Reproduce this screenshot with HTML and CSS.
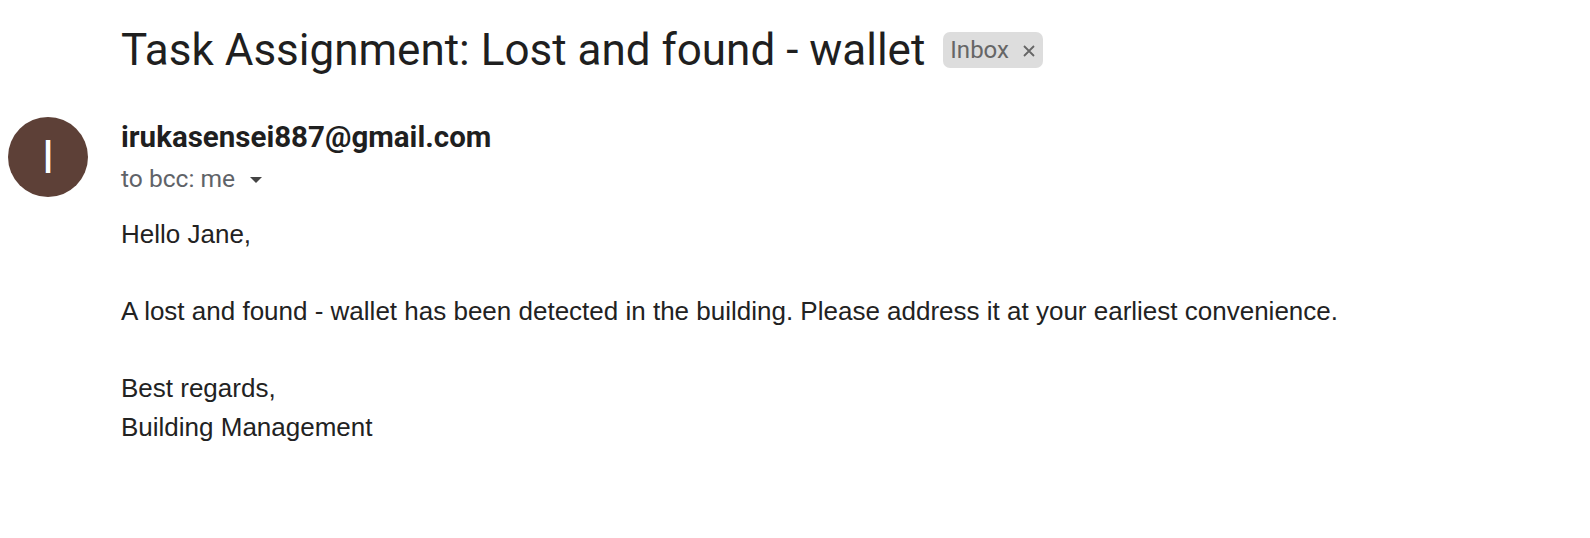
FILE: index.html
```html
<!DOCTYPE html>
<html lang="en">
<head>
<meta charset="utf-8">
<title>Task Assignment: Lost and found - wallet</title>
<link rel="stylesheet" href="styles.css">
</head>
<body>
<div class="mail">
  <div class="subject-row">
    <h1 class="subject">Task Assignment: Lost and found - wallet</h1>
    <span class="chip">Inbox
      <svg class="chip-x" width="12" height="12" viewBox="0 0 12 12"><path d="M1 1 L11 11 M11 1 L1 11" stroke="#666" stroke-width="1.8" fill="none"/></svg>
    </span>
  </div>
  <div class="message">
    <div class="avatar">I</div>
    <div class="content">
      <div class="sender">irukasensei887@gmail.com</div>
      <div class="recipients">to bcc: me
        <svg class="caret" width="12" height="6" viewBox="0 0 12 6"><path d="M0 0 L12 0 L6 6 Z" fill="#444"/></svg>
      </div>
      <div class="body">
        <p>Hello Jane,</p>
        <p>A lost and found - wallet has been detected in the building. Please address it at your earliest convenience.</p>
        <p>Best regards,<br>Building Management</p>
      </div>
    </div>
  </div>
</div>
</body>
</html>
```
FILE: styles.css
```css
html, body {
  margin: 0;
  padding: 0;
  background: #ffffff;
}
.mail {
  font-family: Roboto, "Liberation Sans", Arial, sans-serif;
  color: #1f1f1f;
}
.subject-row {
  display: flex;
  align-items: center;
  padding: 25px 0 0 121px;
  height: 50px;
}
.subject {
  margin: 0;
  font-family: Roboto, "Liberation Sans", sans-serif;
  font-weight: 400;
  font-size: 44px;
  line-height: 50px;
  color: #1f1f1f;
}
.chip {
  display: inline-flex;
  align-items: center;
  gap: 14px;
  margin-left: 18px;
  height: 36px;
  padding: 0 8px 0 7px;
  border-radius: 7px;
  background: #dddddd;
  color: #666666;
  font-size: 24px;
  font-family: Roboto, "Liberation Sans", sans-serif;
}
.chip-x {
  display: block;
  margin-top: 2px;
}
.message {
  display: grid;
  grid-template-columns: 121px 1fr;
  margin-top: 42px;
}
.avatar {
  width: 80px;
  height: 80px;
  margin-left: 8px;
  border-radius: 50%;
  background: #5d4037;
  color: #ffffff;
  font-family: Roboto, "Liberation Sans", sans-serif;
  font-size: 46px;
  display: flex;
  align-items: center;
  justify-content: center;
}
.content {
  padding-top: 2px;
}
.sender {
  font-family: Roboto, "Liberation Sans", sans-serif;
  font-weight: 700;
  font-size: 29.5px;
  line-height: 36px;
  color: #1f1f1f;
}
.recipients {
  display: flex;
  align-items: center;
  gap: 15px;
  font-family: Roboto, "Liberation Sans", sans-serif;
  font-size: 24.6px;
  line-height: 40px;
  color: #5f6368;
  padding-top: 4px;
}
.caret {
  display: block;
  margin-top: 2px;
}
.body {
  font-family: "Liberation Sans", Arial, sans-serif;
  font-size: 26px;
  line-height: 38.5px;
  color: #222222;
  padding-top: 16px;
}
.body p {
  margin: 0 0 38.5px 0;
}
```
